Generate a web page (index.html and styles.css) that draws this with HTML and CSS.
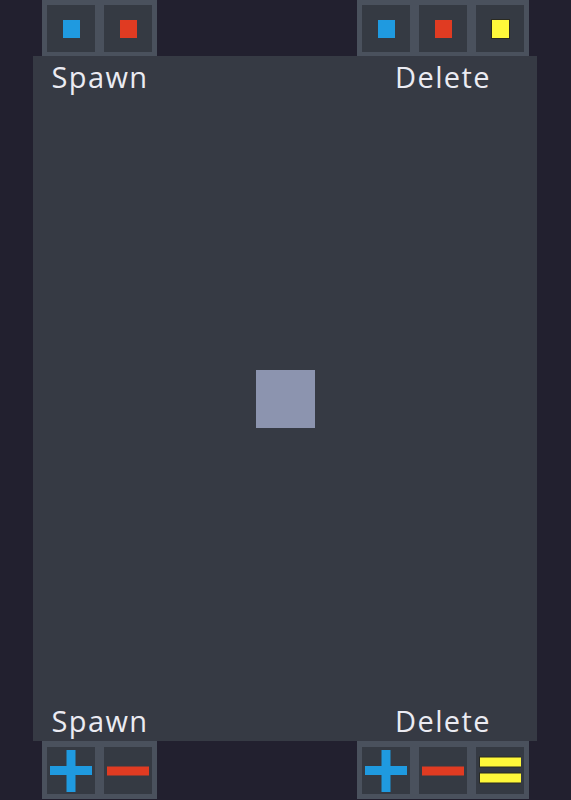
FILE: index.html
```html
<!DOCTYPE html>
<html>
<head>
<meta charset="utf-8">
<link rel="stylesheet" href="styles.css">
</head>
<body>
<div class="app">
  <div class="bar bar-top">
    <div class="tray tray-left">
      <div class="btn"><span class="sq blue"></span></div>
      <div class="btn"><span class="sq red"></span></div>
    </div>
    <div class="tray tray-right">
      <div class="btn"><span class="sq blue"></span></div>
      <div class="btn"><span class="sq red"></span></div>
      <div class="btn"><span class="sq yellow"></span></div>
    </div>
  </div>
  <div class="panel">
    <div class="labels labels-top">
      <div class="label label-left">Spawn</div>
      <div class="label label-right">Delete</div>
    </div>
    <div class="stage">
      <div class="block"></div>
    </div>
    <div class="labels labels-bottom">
      <div class="label label-left">Spawn</div>
      <div class="label label-right">Delete</div>
    </div>
  </div>
  <div class="bar bar-bottom">
    <div class="tray tray-left">
      <div class="btn">
        <svg class="ico" viewBox="0 0 42 42"><rect x="0" y="16" width="42" height="9" fill="#1f9ae0"/><rect x="16.5" y="0" width="9" height="42" fill="#1f9ae0"/></svg>
      </div>
      <div class="btn">
        <svg class="ico" viewBox="0 0 42 42"><rect x="0" y="16.5" width="42" height="9" fill="#e03b22"/></svg>
      </div>
    </div>
    <div class="tray tray-right">
      <div class="btn">
        <svg class="ico" viewBox="0 0 42 42"><rect x="0" y="16" width="42" height="9" fill="#1f9ae0"/><rect x="16.5" y="0" width="9" height="42" fill="#1f9ae0"/></svg>
      </div>
      <div class="btn">
        <svg class="ico" viewBox="0 0 42 42"><rect x="0" y="16.5" width="42" height="9" fill="#e03b22"/></svg>
      </div>
      <div class="btn">
        <svg class="ico" viewBox="0 0 42 42"><rect x="0.5" y="7" width="42" height="10" fill="#fff83a" stroke="#2a2a20" stroke-width="1"/><rect x="0.5" y="23" width="42" height="10" fill="#fff83a" stroke="#2a2a20" stroke-width="1"/></svg>
      </div>
    </div>
  </div>
</div>
</body>
</html>
```
FILE: styles.css
```css
html, body {
  margin: 0;
  padding: 0;
  background: #22202f;
  height: 100%;
  overflow: hidden;
}
.app {
  width: 571px;
  height: 800px;
  display: flex;
  flex-direction: column;
  font-family: "Open Sans", "Liberation Sans", sans-serif;
}
.bar {
  display: flex;
  justify-content: space-between;
  padding: 0 42px 0 42px;
  width: 487px;
  box-sizing: content-box;
}
.bar-top {
  height: 56px;
  align-items: flex-end;
}
.bar-bottom {
  height: 59px;
  align-items: flex-start;
}
.tray {
  display: flex;
  gap: 9px;
  background: #4a515d;
  padding: 5px 5px;
}
.bar-top .tray {
  padding-bottom: 4px;
}
.bar-bottom .tray {
  padding-top: 6px;
}
.tray-left { width: 105px; }
.tray-right { width: 162px; }
.btn {
  width: 48px;
  height: 47px;
  background: #353a43;
  display: flex;
  align-items: center;
  justify-content: center;
  flex: none;
}
.sq {
  width: 17px;
  height: 18px;
  display: block;
}
.sq.blue { background: #1f9ae0; }
.sq.red { background: #e03b22; }
.sq.yellow { background: #fff83a; outline: 1px solid #2a2a20; }
.ico {
  width: 42px;
  height: 42px;
  display: block;
}
.panel {
  margin-left: 33px;
  width: 504px;
  height: 685px;
  background: #363a44;
  display: flex;
  flex-direction: column;
}
.labels {
  display: flex;
  justify-content: space-between;
  padding: 0 8px 0 9px;
}
.labels-top { padding-top: 3px; }
.labels-bottom { padding-bottom: 2px; }
.label {
  color: #ebebf2;
  font-size: 29px;
  line-height: 36px;
  letter-spacing: 1.4px;
  text-align: center;
}
.label-left { width: 116px; }
.label-right { width: 172px; }
.stage {
  flex: 1;
  display: flex;
  align-items: center;
  justify-content: center;
}
.block {
  width: 59px;
  height: 58px;
  background: #8c94af;
  margin-left: 1px;
}
```
